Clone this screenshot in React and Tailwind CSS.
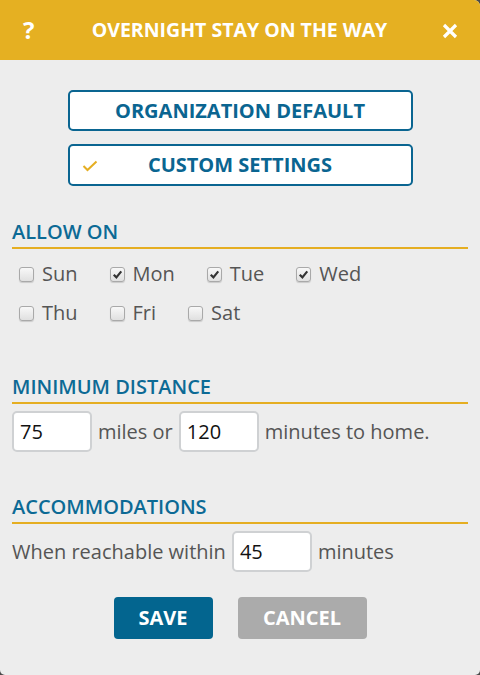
import React from "react";

function Check({ checked, label }) {
  return (
    <label className="flex items-center">
      <span className="w-[15px] h-[15px] rounded-[3px] border border-[#a9a9a9] bg-gradient-to-b from-[#f8f8f8] to-[#e0e0e0] shadow-[0_1px_1px_rgba(0,0,0,0.15)] flex items-center justify-center">
        {checked && (
          <svg width="11" height="11" viewBox="0 0 10 10">
            <path d="M1.6 5.2 L4 7.6 L8.4 2.2" fill="none" stroke="#333" strokeWidth="2" />
          </svg>
        )}
      </span>
      <span className="ml-[8px] text-[20px] leading-[24px] text-[#555]">{label}</span>
    </label>
  );
}

function Heading({ children, className = "" }) {
  return (
    <div className={"mx-[12px] border-b-2 border-[#E5AE22] pb-[3px] text-[20px] leading-[24px] font-semibold text-[#0C6A95] " + className}>
      {children}
    </div>
  );
}

function Box({ value }) {
  return (
    <div className="w-[80px] h-[41px] bg-white border-2 border-[#cfd1d3] rounded-[5px] flex items-center pl-[6px] text-[20px] text-[#111]">
      {value}
    </div>
  );
}

export default function App() {
  return (
    <div className="w-[480px] h-[675px] bg-[#4a4a4a]" style={{ fontFamily: '"Open Sans", sans-serif' }}>
      <div className="w-[480px] h-[675px] bg-[#EDEDED] rounded-tr-[6px] rounded-b-[5px] overflow-hidden flex flex-col">
        <div className="h-[60px] bg-[#E5B022] flex items-center pl-[23px] pr-[22px] text-white">
          <span className="w-[14px] text-[24px] font-bold leading-none">?</span>
          <span className="flex-1 text-center text-[19.5px] font-bold">OVERNIGHT STAY ON THE WAY</span>
          <svg width="16" height="16" viewBox="0 0 16 16" className="mt-[1px]">
            <path d="M2 2 L14 14 M14 2 L2 14" stroke="white" strokeWidth="3.2" strokeLinecap="butt" />
          </svg>
        </div>

        <div className="mt-[30px] flex flex-col items-center gap-[13px]">
          <div className="w-[345px] h-[41px] border-2 border-[#0A6591] rounded-[5px] bg-white flex items-center justify-center text-[20px] font-bold text-[#0A6591]">
            ORGANIZATION DEFAULT
          </div>
          <div className="relative w-[345px] h-[42px] border-2 border-[#0A6591] rounded-[5px] bg-white flex items-center justify-center text-[20px] font-bold text-[#0A6591]">
            <svg width="16" height="12" viewBox="0 0 16 12" className="absolute left-[12px] top-[14px]">
              <path d="M1.5 6 L5.5 10 L14.5 1.5" fill="none" stroke="#E5AE22" strokeWidth="2" />
            </svg>
            CUSTOM SETTINGS
          </div>
        </div>

        <Heading className="mt-[34px]">ALLOW ON</Heading>
        <div className="ml-[19px] mt-[13px] flex flex-col gap-[15px]">
          <div className="flex gap-[32px]">
            <Check label="Sun" />
            <Check checked label="Mon" />
            <Check checked label="Tue" />
            <Check checked label="Wed" />
          </div>
          <div className="flex gap-[32px]">
            <Check label="Thu" />
            <Check label="Fri" />
            <Check label="Sat" />
          </div>
        </div>

        <Heading className="mt-[50px]">MINIMUM DISTANCE</Heading>
        <div className="mx-[12px] mt-[7px] flex items-center gap-[6px] text-[20px] text-[#555]">
          <Box value="75" />
          <span>miles or</span>
          <Box value="120" />
          <span>minutes to home.</span>
        </div>

        <Heading className="mt-[43px]">ACCOMMODATIONS</Heading>
        <div className="mx-[12px] mt-[7px] flex items-center gap-[6px] text-[20px] text-[#555]">
          <span>When reachable within</span>
          <Box value="45" />
          <span>minutes</span>
        </div>

        <div className="mt-[25px] flex justify-center gap-[25px]">
          <div className="w-[99px] h-[42px] rounded-[4px] bg-[#03658F] text-white text-[20px] font-bold flex items-center justify-center">SAVE</div>
          <div className="w-[129px] h-[42px] rounded-[4px] bg-[#ABABAB] text-white text-[20px] font-bold flex items-center justify-center">CANCEL</div>
        </div>
      </div>
    </div>
  );
}
